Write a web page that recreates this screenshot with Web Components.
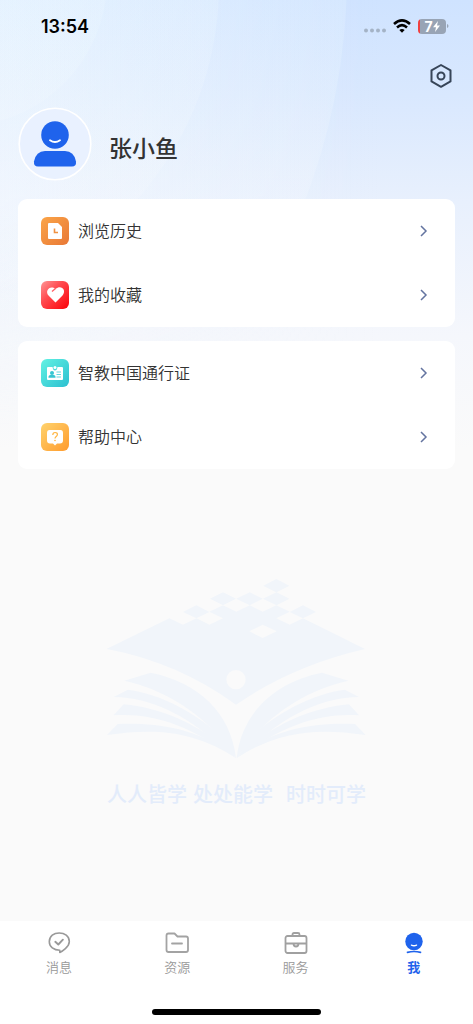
<!DOCTYPE html>
<html lang="zh-CN">
<head>
<meta charset="utf-8">
<meta name="viewport" content="width=device-width, initial-scale=1">
<title>我</title>
<style>
html, body { margin: 0; }
body { font-family: "Noto Sans CJK SC", "Liberation Sans", sans-serif; color: #333; background: #fafafa; }
</style>
</head>
<body>
<profile-page>
  <status-bar slot="top"></status-bar>
  <profile-header slot="top">张小鱼</profile-header>
  <menu-card>
    <menu-row icon="history">浏览历史</menu-row>
    <menu-row icon="heart">我的收藏</menu-row>
  </menu-card>
  <menu-card>
    <menu-row icon="pass">智教中国通行证</menu-row>
    <menu-row icon="help">帮助中心</menu-row>
  </menu-card>
  <brand-mark slot="brand"></brand-mark>
  <tab-bar slot="bottom">
    <tab-item icon="message">消息</tab-item>
    <tab-item icon="folder">资源</tab-item>
    <tab-item icon="case">服务</tab-item>
    <tab-item icon="me" active>我</tab-item>
  </tab-bar>
</profile-page>

<script>
const define = (name, render) => customElements.define(name, class extends HTMLElement {
  constructor() {
    super();
    this.attachShadow({ mode: "open" });
  }
  connectedCallback() {
    this.shadowRoot.innerHTML = render(this);
  }
});

const rowIcons = {
  history: `<defs><linearGradient id="g" x1="0" y1="0" x2="1" y2="1"><stop stop-color="#fba548"/><stop offset="1" stop-color="#e87836"/></linearGradient></defs>
    <rect width="28" height="28" rx="6" fill="url(#g)"/>
    <path d="M8 6h9l4 4v11q0 1-1 1H8q-1 0-1-1V7q0-1 1-1z" fill="#fff"/>
    <path d="M13.500 11.500v4h3.500" fill="none" stroke="#f09242" stroke-width="1.600"/>`,
  heart: `<defs><linearGradient id="g" x1="0" y1="0" x2="1" y2="1"><stop stop-color="#ff9696"/><stop offset=".4" stop-color="#ff4b50"/><stop offset="1" stop-color="#fb0007"/></linearGradient></defs>
    <rect width="28" height="28" rx="6" fill="url(#g)"/>
    <path d="M14.500 21.500l-7-7C3.500 10 9 3.500 14.500 8 20 3.500 26 9 21.500 14.500z" fill="#fff"/>
    <path d="M11 10.500l3.500-3" fill="none" stroke="#ff5c62" stroke-width="1.300"/>`,
  pass: `<defs><linearGradient id="g" x1="0" y1="0" x2="1" y2="1"><stop stop-color="#62f2e3"/><stop offset="1" stop-color="#2bbfd0"/></linearGradient></defs>
    <rect width="28" height="28" rx="6" fill="url(#g)"/>
    <path d="M7 8h4.500q.5 3.500 2.500 3.500T16.500 8H21q1 0 1 1v11q0 1-1 1H7q-1 0-1-1V9q0-1 1-1z" fill="#fff"/>
    <circle cx="14" cy="8.500" r="1.500" fill="#fff"/>
    <circle cx="11" cy="14" r="2" fill="#36c6d2"/><path d="M7.500 18.700v-1q0-1.500 2-1.700h3q2 .2 2 1.700v1z" fill="#36c6d2"/>
    <path d="M15.500 13h4.500M15.500 15.500h4.500M15.500 18h4.500" stroke="#65d7df"/>`,
  help: `<defs><linearGradient id="g" x1="0" y1="0" x2="1" y2="1"><stop stop-color="#ffd36d"/><stop offset="1" stop-color="#ff9b2d"/></linearGradient></defs>
    <rect width="28" height="28" rx="6" fill="url(#g)"/>
    <path d="M8.500 7h11Q22 7 22 10v7.500q0 3-3 3h-3L14 22.500l-2-2H9q-3 0-3-3V10q0-3 2.500-3z" fill="#fff"/>
    <path d="M11.800 12q0-2.500 2.300-2.500t2.300 2.100q0 1-1.200 1.900T14 15.500" fill="none" stroke="#ffb43f" stroke-width="1.200"/><circle cx="14" cy="17.500" r=".8" fill="#ffb43f"/>`
};

const tabIcons = {
  message: `<g fill="none" stroke="#999" stroke-width="1.600" stroke-linecap="round" stroke-linejoin="round"><path d="M12.800 20.200v2.200C15 21.500 22.300 17 22.300 11.500C22.300 6 17.500 3 12.200 3S2.300 6 2.300 11.800c0 5 4.500 8.400 10.500 8.400z"/><path d="M8.300 11.800l3 2.700 4.600-4.800" stroke-width="1.900"/></g>`,
  folder: `<g fill="none" stroke="#a3a3a3" stroke-width="1.800" stroke-linecap="round" stroke-linejoin="round"><path d="M3.500 3.500h6l3 3H21q2 0 2 2v11.500q0 2-2 2H3.500q-2 0-2-2V5.500q0-2 2-2z"/><path d="M7 13.500h10"/></g>`,
  case: `<g fill="none" stroke="#a0a0a0" stroke-width="1.800" stroke-linejoin="round"><rect x="1.500" y="6" width="21" height="17" rx="2"/><path d="M8.500 6V4.500Q8.500 3 10 3h4q1.500 0 1.500 1.500V6M1.500 13.500h21M9.500 13.500q0 3 2.500 3t2.500-3"/></g>`,
  me: `<circle cx="12" cy="11.500" r="8.700" fill="#1f63ec"/><path d="M9.500 15.200q2.500 1.300 5 0" fill="none" stroke="#fff" stroke-width="1.500" stroke-linecap="round"/><path d="M5.500 22.300q6.500-1.600 13 0" fill="none" stroke="#1f63ec" stroke-width="1.700" stroke-linecap="round"/>`
};

define("profile-page", () => `
  <style>
    :host { position: relative; display: flex; flex-direction: column; min-height: 100vh; isolation: isolate; }
    .sky { position: absolute; z-index: -1; top: 0; left: 0; width: 100%; height: 480px; }
    main { flex: 1; display: flex; flex-direction: column; gap: 14px; padding: 0 18px; }
    .brand { margin-top: 95px; }
  </style>
  <svg class="sky" viewBox="0 0 473 480" preserveAspectRatio="none" aria-hidden="true">
    <defs>
      <linearGradient id="base" x1="0" y1="0" x2="0" y2="1">
        <stop stop-color="#cfe3ff"/><stop offset=".2" stop-color="#d9e8fe"/><stop offset=".42" stop-color="#e8f0fd"/><stop offset=".7" stop-color="#f5f7fc"/><stop offset=".94" stop-color="#fafafa"/>
      </linearGradient>
      <linearGradient id="side">
        <stop stop-color="#f4fbff" stop-opacity=".4"/><stop offset=".8" stop-color="#f4fbff" stop-opacity="0"/>
      </linearGradient>
      <linearGradient id="fade" x1="0" y1="0" x2="0" y2="1">
        <stop offset=".4" stop-color="#fff"/><stop offset=".9" stop-color="#000"/>
      </linearGradient>
      <mask id="down"><rect width="473" height="480" fill="url(#fade)"/></mask>
      <linearGradient id="arc" gradientUnits="userSpaceOnUse" x1="0" y1="0" x2="0" y2="340">
        <stop stop-color="#f0faff" stop-opacity=".18"/><stop offset=".6" stop-color="#f5f8ff" stop-opacity=".26"/><stop offset="1" stop-color="#fafafa" stop-opacity="0"/>
      </linearGradient>
    </defs>
    <rect width="473" height="480" fill="url(#base)"/>
    <rect width="473" height="480" fill="url(#side)" mask="url(#down)"/>
    <g fill="url(#arc)"><circle cx="-286" cy="-26" r="633"/><circle cx="-102" cy="-15" r="321"/><circle cx="-39" cy="-20" r="146"/></g>
  </svg>
  <slot name="top"></slot>
  <main><slot></slot><div class="brand"><slot name="brand"></slot></div></main>
  <slot name="bottom"></slot>`);

define("status-bar", () => `
  <style>
    :host { display: flex; align-items: center; justify-content: space-between; height: 52px; padding: 0 24px 0 41px; font-family: Inter, sans-serif; color: #000; }
    time { margin-top: 2px; font-size: 18px; font-weight: 600; line-height: 24px; }
    .right { display: flex; align-items: center; gap: 7px; }
    .battery { display: flex; align-items: center; }
    .cell { display: flex; align-items: center; justify-content: center; box-sizing: border-box; width: 28px; height: 15px; border-radius: 4px; color: #fff; font-size: 14px; font-weight: 700; line-height: 15px; background: linear-gradient(90deg, #f04040 2px, #98a4b5 2px); }
  </style>
  <time>13:54</time>
  <div class="right">
    <svg width="22" height="14" viewBox="0 0 22 14" fill="#a4b3c6"><circle cx="2" cy="11.500" r="2"/><circle cx="8" cy="11.500" r="2"/><circle cx="14" cy="11.500" r="2"/><circle cx="20" cy="11.500" r="2"/></svg>
    <svg width="18" height="14" viewBox="0 0 18 14"><g fill="none" stroke="#000" stroke-width="2.600"><path d="M1 5q8-7.200 16 0M4 8.400q5-4.400 10 0"/></g><path d="M6.300 11q2.700-2.200 5.400 0L9 13.700z"/></svg>
    <div class="battery"><span class="cell">7<svg width="7" height="11" viewBox="0 0 7 11" fill="#fff"><path d="M5 0L0 6.200h3L2 11l5-6.500H4z"/></svg></span>
    <svg width="3" height="6" viewBox="0 0 3 6" fill="#98a4b5"><path d="M1 1q1.500.5 1.500 2T1 5z"/></svg></div>
  </div>`);

define("profile-header", () => `
  <style>
    :host { display: flex; flex-direction: column; padding: 8px 18px 18px; }
    button { align-self: flex-end; display: flex; padding: 2px; border: 0; background: none; }
    .who { display: flex; align-items: center; gap: 17px; margin-top: 15px; }
    h1 { margin: 6px 0 0; font-size: 23px; line-height: 32px; font-weight: 500; }
  </style>
  <button aria-label="设置"><svg width="24" height="28" viewBox="0 0 24 28" fill="none" stroke="#374558" stroke-width="2" stroke-linejoin="round"><path d="M12 3l9.500 5.400v11L12 24.800l-9.500-5.400v-11z"/><circle cx="12" cy="14" r="3.500"/></svg></button>
  <div class="who">
    <svg width="74" height="74" viewBox="0 0 74 74" aria-hidden="true"><circle cx="37" cy="37" r="35.800" fill="#e9f1ff" stroke="#fff" stroke-width="1.600"/><circle cx="37" cy="28" r="13.800" fill="#1f63ec"/><path d="M32 33.200q5 3.600 10 0" fill="none" stroke="#fff" stroke-width="1.800" stroke-linecap="round"/><path d="M27 44h20q9 0 11 10.500.5 5-4 5H20q-4.500 0-4-5Q18 44 27 44z" fill="#1f63ec"/></svg>
    <h1><slot></slot></h1>
  </div>`);

define("menu-card", () => `
  <style>:host { display: flex; flex-direction: column; border-radius: 9px; background: #fff; }</style>
  <slot></slot>`);

define("menu-row", el => `
  <style>
    :host { display: block; }
    a { display: flex; align-items: center; gap: 9px; height: 64px; padding: 0 26px 0 23px; color: #333; text-decoration: none; font-size: 16px; line-height: 24px; font-weight: 350; }
    span { flex: 1; padding-bottom: 2px; }
  </style>
  <a href="#"><svg width="28" height="28" viewBox="0 0 28 28" aria-hidden="true">${rowIcons[el.getAttribute("icon")]}</svg><span><slot></slot></span>
  <svg width="10" height="14" viewBox="0 0 10 14" fill="none" stroke="#6474a0" stroke-width="1.500" aria-hidden="true"><path d="M2 2l5 5-5 5"/></svg></a>`);

define("brand-mark", () => `
  <style>
    :host { display: flex; flex-direction: column; align-items: center; }
    p { margin: 22px 0 0; display: flex; font-size: 20px; line-height: 28px; font-weight: 500; color: #e3ecfb; white-space: nowrap; }
    .second { margin: 0 13px 0 6px; }
  </style>
  <svg width="260" height="180" viewBox="33 22 780 540" fill="#f1f5fa" aria-hidden="true">
    <path fill-rule="evenodd" d="M32 235L220 143l41 19 40-19 39 19 41-19-41-20 41-19 40 19 40-19 39 19 41-19 40 19-40 20 40 19 40-19 186 92Q590 285 420 402 245 275 32 235zM460 182l40 20 42-20-42-20zM391 327a29 29 0 1 0 58 0 29 29 0 1 0-58 0z"/>
    <path d="M541 25l39 20-39 20-39-20zM381 65l39 19-39 20-39-20zM461 65l39 19-39 20-40-20zM541 65l39 19-39 20-40-20zM301 104l39 20-39 19-40-19zM621 104l39 20-39 19-40-19z"/>
    <g id="pages">
      <path d="M85 330l79-24C310 335 405 430 420 562L370 497C300 420 200 355 85 330z"/>
      <path d="M53 379l43-22C200 370 310 435 375 497L420 562 360 515C270 435 165 380 53 379z"/>
      <path d="M53 434l30-33C190 410 300 460 368 517L420 562 360 524C270 465 165 425 53 434z"/>
      <path d="M33 493l32-33C180 455 290 475 368 525L420 562C300 485 190 470 33 493z"/>
    </g>
    <use href="#pages" transform="translate(842 0) scale(-1 1)"/>
  </svg>
  <p><span>人人皆学</span><span class="second">处处能学</span><span>时时可学</span></p>`);

define("tab-bar", () => `
  <style>
    :host { display: flex; flex-direction: column; justify-content: space-between; align-items: center; height: 103px; background: #fff; }
    nav { display: flex; align-self: stretch; padding-top: 9px; }
    .home { width: 169px; height: 6px; margin-bottom: 9px; border-radius: 3px; background: #000; }
  </style>
  <nav><slot></slot></nav><div class="home"></div>`);

define("tab-item", el => `
  <style>
    :host { flex: 1; display: block; }
    a { display: flex; flex-direction: column; align-items: center; gap: 3px; color: #999; text-decoration: none; font-size: 13px; line-height: 20px; font-weight: 350; }
    :host([active]) a { color: #1f63ec; font-weight: 700; }
  </style>
  <a href="#"><svg width="24" height="24" viewBox="0 0 24 24" aria-hidden="true">${tabIcons[el.getAttribute("icon")]}</svg><slot></slot></a>`);
</script>
</body>
</html>
